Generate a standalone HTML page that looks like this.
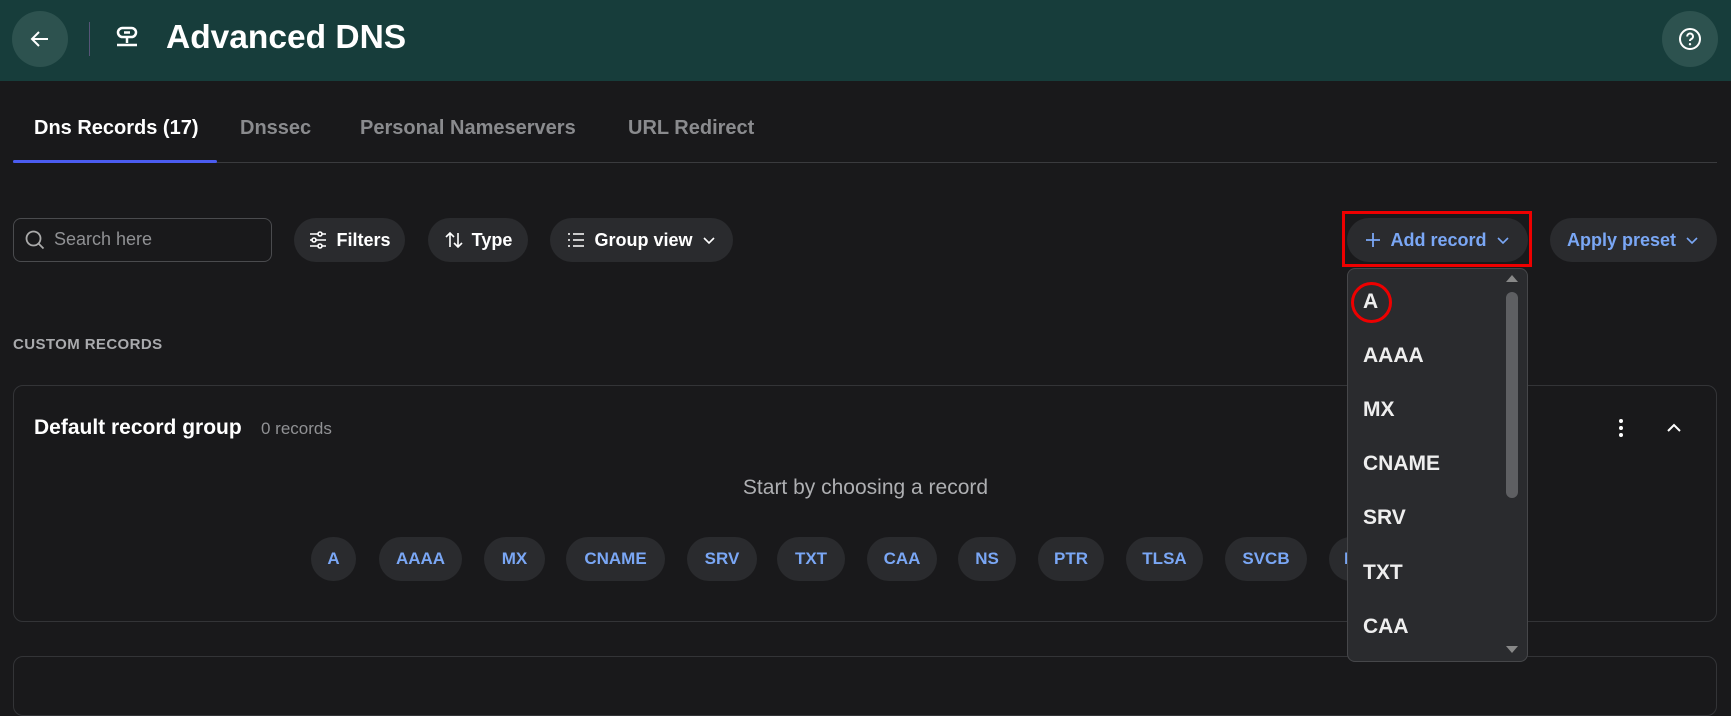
<!DOCTYPE html>
<html><head><meta charset="utf-8"><style>
*{box-sizing:border-box;margin:0;padding:0}
body{width:1731px;height:680px;overflow:hidden;background:#19191b;font-family:"Liberation Sans",sans-serif;color:#fff;position:relative}
.abs{position:absolute}
.hdr{left:0;top:0;width:1731px;height:81px;background:#173d3b}
.circ{border-radius:50%;background:#2d524f}
.pill{position:absolute;height:44px;top:218px;border-radius:22px;background:#2a2b2e;font-weight:bold;font-size:18px;display:flex;align-items:center;justify-content:center;gap:8px}
.chip{position:absolute;top:537px;height:44px;border-radius:22px;background:#2a2b2e;color:#7aa7f5;font-weight:bold;font-size:17px;display:flex;align-items:center;justify-content:center}
.tab{position:absolute;top:117px;font-size:20px;font-weight:bold;color:#8a8b8e}
.item{position:absolute;left:15px;font-size:21px;font-weight:bold;color:#eee;transform:translateY(-50%)}
</style></head><body>
<div class="abs hdr"></div>
<div class="abs circ" style="left:12px;top:11px;width:56px;height:56px"></div>
<svg class="abs" style="left:28px;top:27px" width="24" height="24" viewBox="0 0 24 24"><path d="M20 12H5M11 5l-7 7 7 7" stroke="#fff" stroke-width="2" fill="none"/></svg>
<div class="abs" style="left:89px;top:22px;width:1px;height:34px;background:#557"></div>
<svg class="abs" style="left:113px;top:25px" width="28" height="28" viewBox="0 0 28 28"><rect x="5" y="3" width="18" height="9" rx="4.5" stroke="#fff" stroke-width="2.5" fill="none"/><path d="M11 7.5h6M14 12v6M4 20h20" stroke="#fff" stroke-width="2.5" fill="none"/></svg>
<div class="abs" style="left:166px;top:19px;font-size:33.5px;font-weight:bold">Advanced DNS</div>
<div class="abs circ" style="left:1662px;top:11px;width:56px;height:56px"></div>
<svg class="abs" style="left:1678px;top:27px" width="24" height="24" viewBox="0 0 24 24"><circle cx="12" cy="12" r="10" stroke="#fff" stroke-width="2" fill="none"/><path d="M9.2 9.5a2.9 2.9 0 1 1 4 2.6c-.8.4-1.2 1-1.2 1.9" stroke="#fff" stroke-width="2" fill="none"/><circle cx="12" cy="17.2" r="1.2" fill="#fff"/></svg>

<div class="tab" style="left:34px;color:#fff">Dns Records (17)</div>
<div class="tab" style="left:240px">Dnssec</div>
<div class="tab" style="left:360px">Personal Nameservers</div>
<div class="tab" style="left:628px">URL Redirect</div>
<div class="abs" style="left:13px;top:162px;width:1704px;height:1px;background:#3a3b3e"></div>
<div class="abs" style="left:13px;top:160px;width:204px;height:3px;background:#4b5cf0;border-radius:2px"></div>

<div class="abs" style="left:13px;top:218px;width:259px;height:44px;border:1px solid #4a4b4e;border-radius:8px"></div>
<svg class="abs" style="left:24px;top:229px" width="22" height="22" viewBox="0 0 22 22"><circle cx="9.5" cy="9.5" r="7" stroke="#aaa" stroke-width="1.8" fill="none"/><path d="M14.5 14.5l5 5" stroke="#aaa" stroke-width="1.8"/></svg>
<div class="abs" style="left:54px;top:229px;font-size:18px;color:#909194">Search here</div>
<div class="pill" style="left:294px;width:111px"><svg width="20" height="20" viewBox="0 0 20 20" stroke="#fff" stroke-width="1.6" fill="none"><path d="M2 4h16M2 10h16M2 16h16"/><circle cx="12" cy="4" r="2" fill="#2a2b2e"/><circle cx="6" cy="10" r="2" fill="#2a2b2e"/><circle cx="12" cy="16" r="2" fill="#2a2b2e"/></svg>Filters</div>
<div class="pill" style="left:428px;width:100px"><svg width="20" height="20" viewBox="0 0 20 20" stroke="#fff" stroke-width="1.6" fill="none"><path d="M6 17V3M2 7l4-4 4 4M14 3v14M10 13l4 4 4-4"/></svg>Type</div>
<div class="pill" style="left:550px;width:183px"><svg width="20" height="20" viewBox="0 0 20 20" stroke="#fff" stroke-width="1.6" fill="none"><path d="M7 4h11M7 10h11M7 16h11M2 4h2M2 10h2M2 16h2"/></svg>Group view<svg width="16" height="16" viewBox="0 0 16 16"><path d="M3 6l5 5 5-5" stroke="#fff" stroke-width="1.6" fill="none"/></svg></div>
<div class="pill" style="left:1347px;width:181px;color:#7aa7f5"><svg width="18" height="18" viewBox="0 0 18 18"><path d="M9 2v14M2 9h14" stroke="#7aa7f5" stroke-width="1.8"/></svg>Add record<svg width="16" height="16" viewBox="0 0 16 16"><path d="M3 6l5 5 5-5" stroke="#7aa7f5" stroke-width="1.6" fill="none"/></svg></div>
<div class="abs" style="left:1342px;top:211px;width:190px;height:56px;border:3px solid #e00"></div>
<div class="pill" style="left:1550px;width:167px;color:#7aa7f5">Apply preset<svg width="16" height="16" viewBox="0 0 16 16"><path d="M3 6l5 5 5-5" stroke="#7aa7f5" stroke-width="1.6" fill="none"/></svg></div>

<div class="abs" style="left:13px;top:336px;font-size:15px;font-weight:bold;color:#a9aaad;letter-spacing:0.4px">CUSTOM RECORDS</div>
<div class="abs" style="left:13px;top:385px;width:1704px;height:237px;border:1px solid #333437;border-radius:10px"></div>
<div class="abs" style="left:13px;top:656px;width:1704px;height:60px;border:1px solid #333437;border-radius:10px"></div>
<div class="abs" style="left:34px;top:416px;font-size:21px;font-weight:bold">Default record group</div>
<div class="abs" style="left:261px;top:419px;font-size:17px;color:#909194">0 records</div>
<svg class="abs" style="left:1611px;top:417px" width="20" height="22"><circle cx="10" cy="4" r="2" fill="#fff"/><circle cx="10" cy="11" r="2" fill="#fff"/><circle cx="10" cy="18" r="2" fill="#fff"/></svg>
<svg class="abs" style="left:1665px;top:419px" width="18" height="18"><path d="M3 12l6-6 6 6" stroke="#fff" stroke-width="2" fill="none"/></svg>
<div class="abs" style="left:0;width:1731px;text-align:center;top:476px;font-size:21px;color:#aeafb2">Start by choosing a record</div>

<div class="chip" style="left:311px;width:45px">A</div>
<div class="chip" style="left:379px;width:83px">AAAA</div>
<div class="chip" style="left:484px;width:61px">MX</div>
<div class="chip" style="left:566px;width:99px">CNAME</div>
<div class="chip" style="left:687px;width:70px">SRV</div>
<div class="chip" style="left:777px;width:68px">TXT</div>
<div class="chip" style="left:867px;width:70px">CAA</div>
<div class="chip" style="left:958px;width:58px">NS</div>
<div class="chip" style="left:1038px;width:66px">PTR</div>
<div class="chip" style="left:1126px;width:77px">TLSA</div>
<div class="chip" style="left:1225px;width:82px">SVCB</div>
<div class="chip" style="left:1329px;width:80px;justify-content:flex-start;padding-left:15px">HTTPS</div>

<div class="abs" style="left:1347px;top:268px;width:181px;height:394px;background:#2a2b2e;border:1px solid #46474a;border-radius:8px">
<svg class="abs" style="left:156px;top:4px" width="16" height="10"><path d="M2 9l6-7 6 7z" fill="#888"/></svg>
<svg class="abs" style="left:156px;top:376px" width="16" height="10"><path d="M2 1l6 7 6-7z" fill="#888"/></svg>
<div class="abs" style="left:158px;top:23px;width:12px;height:206px;border-radius:6px;background:#5e5f62"></div>
<div class="item" style="top:33px">A</div>
<div class="item" style="top:87px">AAAA</div>
<div class="item" style="top:141px">MX</div>
<div class="item" style="top:195px">CNAME</div>
<div class="item" style="top:249px">SRV</div>
<div class="item" style="top:304px">TXT</div>
<div class="item" style="top:358px">CAA</div>
<div class="abs" style="left:3px;top:13px;width:41px;height:41px;border:3px solid #e00;border-radius:50%"></div>
</div>
</body></html>
